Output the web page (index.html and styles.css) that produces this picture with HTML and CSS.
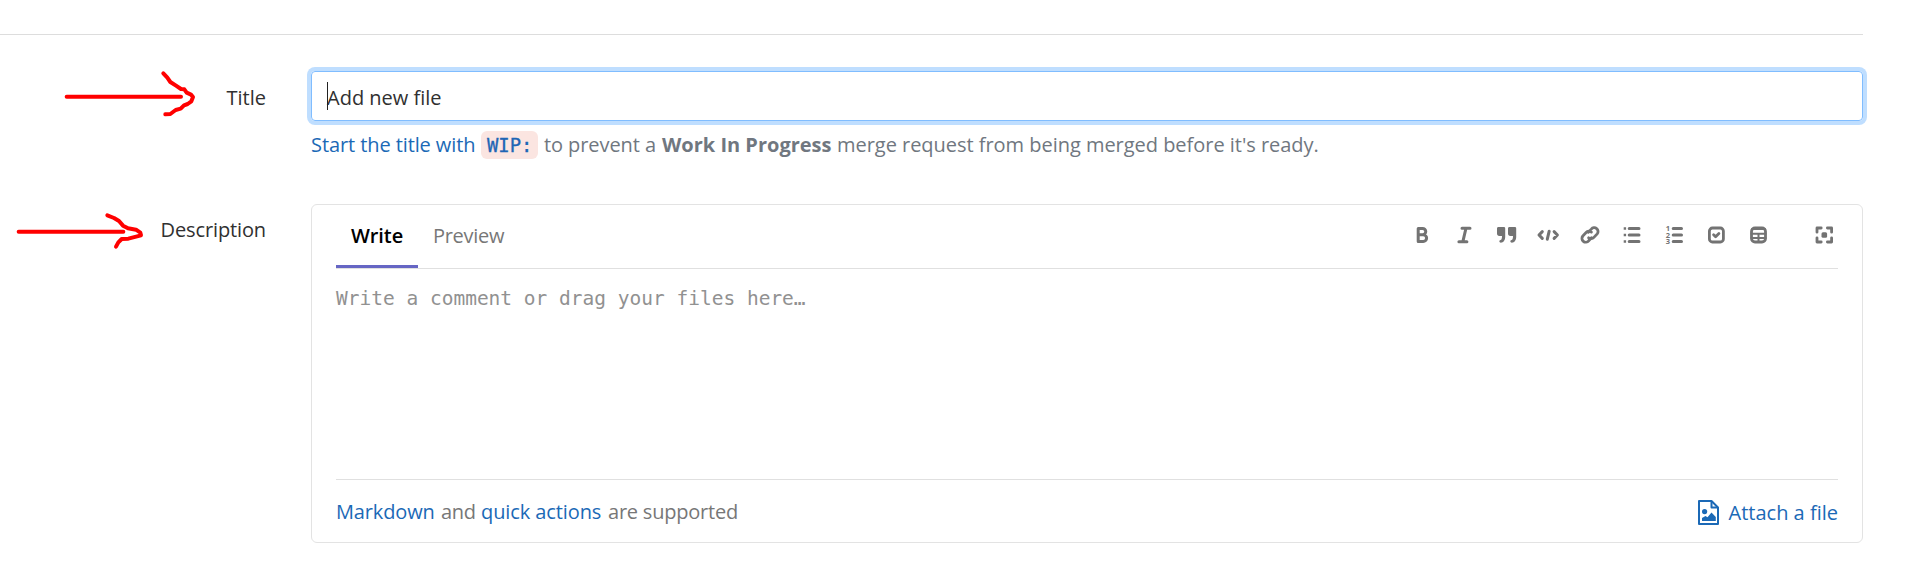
FILE: index.html
```html
<!DOCTYPE html>
<html lang="en">
<head>
<meta charset="utf-8">
<title>New merge request</title>
<link rel="stylesheet" href="styles.css">
</head>
<body>
<form class="mr-form">
  <div class="form-row title-row">
    <div class="label"><span class="t-title">Title</span></div>
    <div class="field">
      <div class="title-input"><span class="caret"></span><span class="t-value">Add new file</span></div>
      <p class="help"><a class="t-start">Start the title with</a><code class="chip">WIP:</code><span class="t-prevent">to prevent a</span><strong class="t-wip">Work In Progress</strong><span class="t-merge">merge request from being merged before it's ready.</span></p>
    </div>
  </div>
  <div class="form-row">
    <div class="label label-desc"><span class="t-desc">Description</span></div>
    <div class="field editor">
      <div class="tabs">
        <div class="tab active"><span class="t-write">Write</span></div>
        <div class="tab"><span class="t-preview">Preview</span></div>
        <div class="toolbar">
          <svg class="tool" viewBox="0 0 24 24"><path d="M8.200 5.400h4.400a3.100 3.100 0 0 1 0 6.300H8.200zM8.200 11.700h5a3.400 3.400 0 0 1 0 6.800h-5z" class="s3"/></svg>
          <svg class="tool" viewBox="0 0 24 24"><path d="M10 5.200h8M6.900 18.800h8M14 5.200l-3.200 13.600" class="s3"/></svg>
          <svg class="tool" viewBox="0 0 24 24"><path class="f" d="M4.600 4h5.200c1 0 1.400.5 1.400 1.500V14c0 3-1.700 5.700-4.400 5.700-1.800 0-2-2.200-.3-2.600C7.600 16.800 8 15.500 8 13H5.400c-1.600 0-2.400-1-2.400-2.500v-5C3 4.500 3.600 4 4.600 4zM15.600 4h5.200c1 0 1.400.5 1.400 1.500V14c0 3-1.700 5.700-4.400 5.700-1.800 0-2-2.200-.3-2.600 1.100-.3 1.500-1.600 1.500-4.100h-2.600c-1.600 0-2.400-1-2.400-2.500v-5C14 4.500 14.600 4 15.600 4z"/></svg>
          <svg class="tool" viewBox="0 0 24 24"><path class="s3" d="M6.300 8.600L3 12l3.300 3.400M18.100 8.600l3.300 3.400-3.300 3.400M13.200 8.200l-1.900 8"/></svg>
          <svg class="tool" viewBox="0 0 24 24"><path class="s28" d="M10.300 9.300l3-3.200a3.800 3.800 0 0 1 5.900 4.800l-3.300 3.500a3.900 3.900 0 0 1-5.300.4M13.500 14.800l-2.800 3a3.800 3.800 0 0 1-5.900-4.800l3.300-3.500a3.900 3.900 0 0 1 5.300-.4"/></svg>
          <svg class="tool" viewBox="0 0 24 24"><path class="s3" d="M9.200 5.500H19M9.200 12H19M9.200 18.500H19"/><path class="f" d="M3.700 4.300h2.400v2.400H3.700zM3.700 10.800h2.400v2.400H3.700zM3.700 17.300h2.400v2.400H3.700z"/></svg>
          <svg class="tool" viewBox="0 0 24 24"><path class="s3" d="M11.200 5.500h8.300M11.200 12h8.300M11.200 18.500h8.300"/><text class="num" x="3.700" y="8">1</text><text class="num" x="3.700" y="14.700">2</text><text class="num" x="3.700" y="21.400">3</text></svg>
          <svg class="tool" viewBox="0 0 24 24"><rect class="s28" x="5.400" y="5" width="14" height="14" rx="3"/><path class="s28" d="M9.600 11.800l2 2 3.300-3.300"/></svg>
          <svg class="tool" viewBox="0 0 24 24"><rect class="s28" x="5.500" y="5" width="14" height="14" rx="3.500"/><path class="s2" d="M5.500 10.700h14M5.500 15h14M12.500 10.700V19M6 6h13"/></svg>
          <svg class="tool full" viewBox="0 0 24 24"><path class="s28" d="M9.200 5H5v4.200M15.400 5h4.200v4.200M19.600 14.800V19h-4.200M9.200 19H5v-4.200"/><rect class="f" x="9.500" y="9.200" width="5.600" height="5.600" rx="1.500"/></svg>
        </div>
      </div>
      <div class="comment"><span class="t-place">Write a comment or drag your files here…</span></div>
      <div class="footer">
        <div class="support"><a class="t-md">Markdown</a><span class="t-and">and</span><a class="t-quick">quick actions</a><span class="t-sup">are supported</span></div>
        <a class="attach"><svg class="file" viewBox="0 0 21 25"><path d="M1 1h12.500L20 7.500V24H1z" class="o"/><path class="o" d="M13.500 1v6.500H20"/><circle cx="6.600" cy="11.600" r="2.600"/><path d="M4 21v-3l3.500-2 2 1.300 4-4.800 4.300 4.500v4z"/></svg><span class="t-attach">Attach a file</span></a>
      </div>
    </div>
  </div>
</form>
<svg class="arrows" viewBox="0 0 480 240">
  <path d="M200 230H543M490 160l12 13 9 13 17 11 15 10 10 1 7 10 13 6 6 7-5 13-11 8-11 4-10 10-15 4-16 12-15 1"/>
  <path d="M56 635H370M322 586l20 8 15 9 12 14 15 8 24 4 13 9 2 8-38 10-20 1-10 10-7 13"/>
</svg>
</body>
</html>
```
FILE: styles.css
```css
* { box-sizing: border-box; }
body { margin: 0; width: 1924px; height: 582px; overflow: hidden; background: #fff; font: 20px/30px "Open Sans", "Noto Sans", sans-serif; color: #303030; position: relative; }
.mr-form { width: 1863px; margin-top: 34px; border-top: 1px solid #ddd; padding-top: 36px; }
.form-row { display: flex; }
.title-row { height: 133px; }
.label { width: 311px; padding: 12px 45px 0 0; text-align: right; white-space: nowrap; }
.label-desc { padding-top: 11px; }
.t-desc { letter-spacing: -.12px; }
.field { width: 1552px; }
span, a, strong, code { white-space: nowrap; display: inline-block; }
a { color: #1b69b6; }
.title-input { height: 50px; border: 1px solid #80bdff; border-radius: 4px; box-shadow: 0 0 0 4px #bfdeff; padding: 11px 15px 0; position: relative; }
.caret { position: absolute; left: 15px; top: 10px; width: 1px; height: 28px; background: #222; }
.help { display: flex; margin: 9px 0 0; height: 30px; line-height: 26px; color: #707780; align-items: center; }
.t-start { width: 163px; letter-spacing: -.09px; }
.chip { margin: 0 6px 0 7px; width: 57px; height: 28px; padding: 0 6px; border-radius: 6px; background: #fbe5e1; color: #1f66b5; font: 18.900px/28px "DejaVu Sans Mono", monospace; -webkit-text-stroke: .3px #1f66b5; }
.t-prevent { width: 112px; letter-spacing: -.08px; }
.t-wip { width: 170px; margin: 0 5px 0 6px; }
.t-merge { letter-spacing: -.03px; }
.editor { height: 339px; border: 1px solid #e3e3e3; border-radius: 6px; padding: 0 24px; }
.tabs { height: 64px; display: flex; border-bottom: 1px solid #e0e0e0; color: #777; }
.tab { height: 63px; padding: 16px 15px 0; }
.active { width: 82px; color: #000; font-weight: 600; border-bottom: 3px solid #6666c4; }
.t-write { letter-spacing: -.1px; }
.t-preview { letter-spacing: -.3px; }
.toolbar { margin: 18px 2px 0 auto; display: flex; gap: 18px; }
.tool { width: 24px; height: 24px; fill: none; stroke: #737373; stroke-linecap: round; stroke-linejoin: round; }
.full { margin-left: 24px; }
.s3 { stroke-width: 3; }
.s28 { stroke-width: 2.800; }
.s2 { stroke-width: 2; }
.f { fill: #737373; stroke: none; }
.num { font: bold 7.500px "Open Sans", sans-serif; fill: #737373; stroke: none; }
.comment { height: 210px; padding-top: 15px; color: #919191; font: 19.500px/30px "DejaVu Sans Mono", monospace; }
.footer { border-top: 1px solid #e0e0e0; height: 63px; display: flex; justify-content: space-between; padding-top: 18px; color: #777; }
.support { display: flex; margin-top: -1px; }
.t-md { width: 105px; letter-spacing: -.15px; }
.t-and { width: 40px; letter-spacing: -.3px; }
.t-quick { width: 127px; letter-spacing: -.1px; }
.t-sup { letter-spacing: -.22px; }
.attach { display: flex; gap: 10px; }
.file { width: 21px; height: 25px; margin-top: 2px; fill: #1b69b6; }
.o { fill: none; stroke: #1b69b6; stroke-width: 2; stroke-linejoin: round; }
.arrows { position: absolute; left: 0; top: 20px; width: 160px; height: 80px; overflow: visible; fill: none; stroke: #f00; stroke-width: 12; stroke-linecap: round; stroke-linejoin: round; }
```
